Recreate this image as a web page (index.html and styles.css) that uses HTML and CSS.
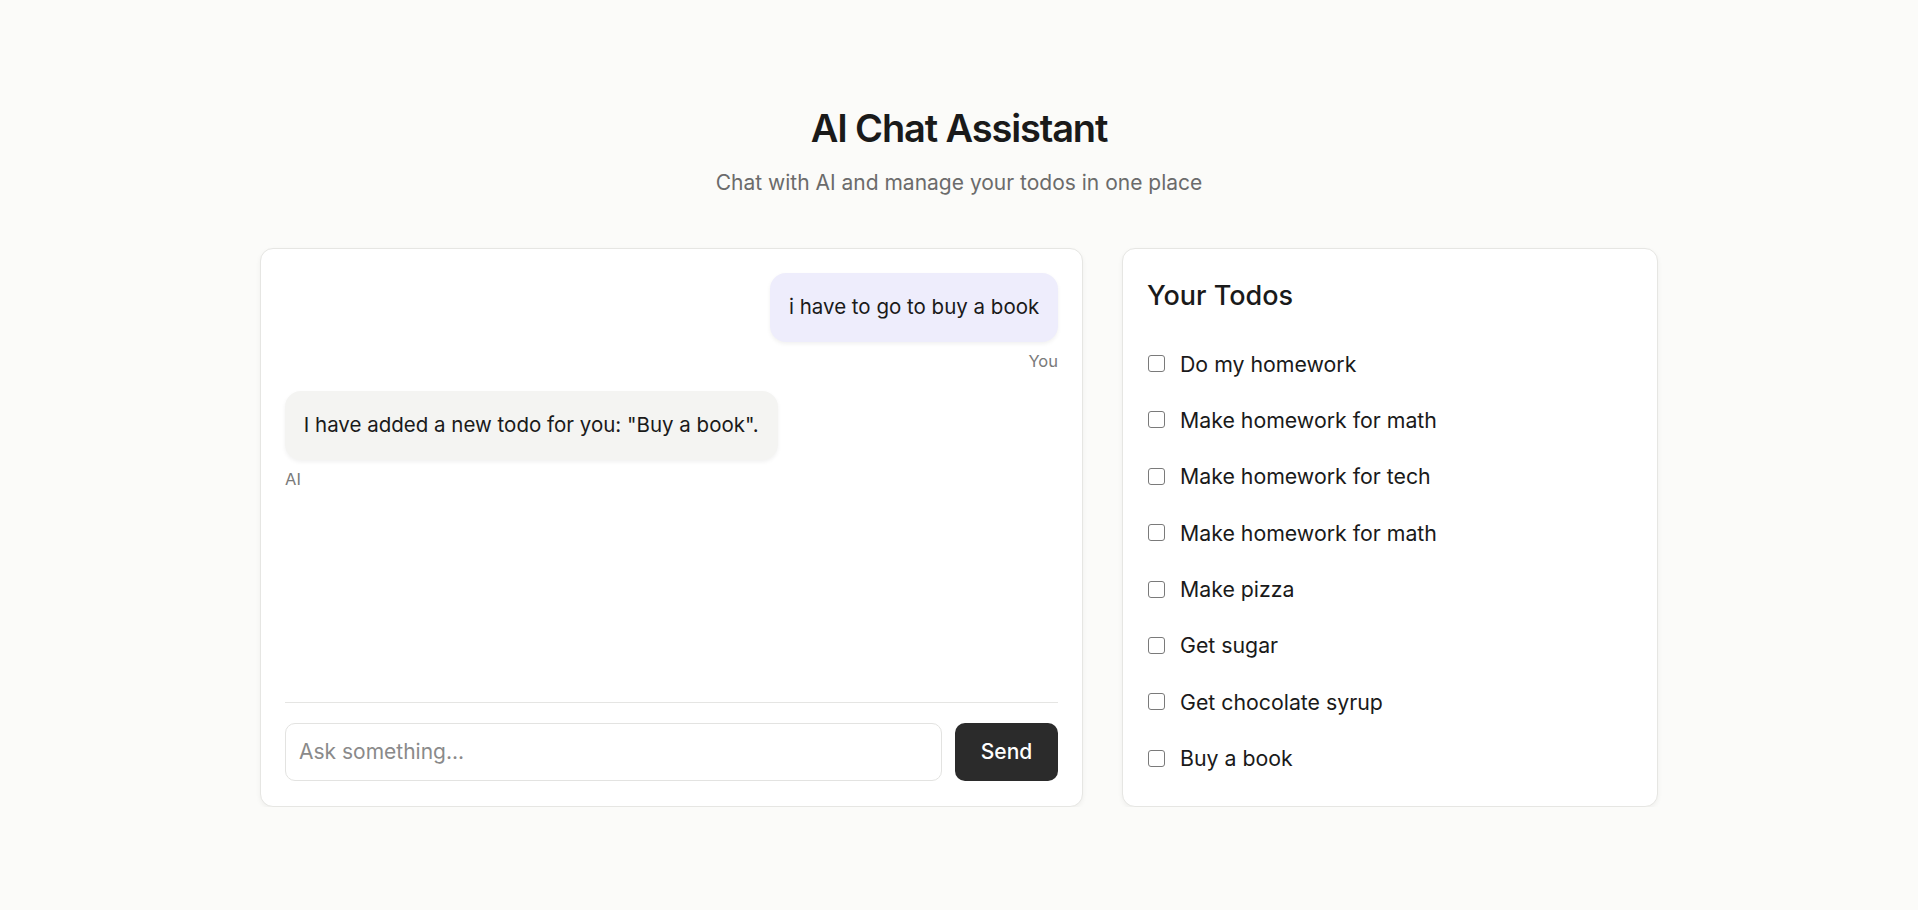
FILE: index.html
```html
<!DOCTYPE html>
<html lang="en">
<head>
<meta charset="utf-8">
<title>AI Chat Assistant</title>
<link rel="stylesheet" href="styles.css">
</head>
<body>
<div class="page">
  <header class="header">
    <h1 class="title">AI Chat Assistant</h1>
    <p class="subtitle">Chat with AI and manage your todos in one place</p>
  </header>
  <main class="layout">
    <section class="card chat">
      <div class="messages">
        <div class="msg msg-user">
          <div class="bubble bubble-user">i have to go to buy a book</div>
          <div class="msg-label">You</div>
        </div>
        <div class="msg msg-ai">
          <div class="bubble bubble-ai">I have added a new todo for you: "Buy a book".</div>
          <div class="msg-label">AI</div>
        </div>
      </div>
      <form class="composer">
        <input class="composer-input" type="text" placeholder="Ask something...">
        <button class="send-btn" type="button">Send</button>
      </form>
    </section>
    <aside class="card todos">
      <h2 class="todos-title">Your Todos</h2>
      <ul class="todo-list">
        <li class="todo-item"><input class="todo-check" type="checkbox"><span>Do my homework</span></li>
        <li class="todo-item"><input class="todo-check" type="checkbox"><span>Make homework for math</span></li>
        <li class="todo-item"><input class="todo-check" type="checkbox"><span>Make homework for tech</span></li>
        <li class="todo-item"><input class="todo-check" type="checkbox"><span>Make homework for math</span></li>
        <li class="todo-item"><input class="todo-check" type="checkbox"><span>Make pizza</span></li>
        <li class="todo-item"><input class="todo-check" type="checkbox"><span>Get sugar</span></li>
        <li class="todo-item"><input class="todo-check" type="checkbox"><span>Get chocolate syrup</span></li>
        <li class="todo-item"><input class="todo-check" type="checkbox"><span>Buy a book</span></li>
      </ul>
    </aside>
  </main>
</div>
</body>
</html>
```

FILE: styles.css
```css
* { box-sizing: border-box; }

html, body {
  margin: 0;
  padding: 0;
}

body {
  background: #fbfbf9;
  color: #1a1a1a;
  font-family: Inter, "Noto Sans", sans-serif;
}

.page {
  width: 1398px;
  margin: 0 auto;
  padding-top: 106px;
}

.header {
  text-align: center;
}

.title {
  margin: 0;
  font-size: 38px;
  line-height: 45.6px;
  font-weight: 600;
  letter-spacing: -0.03em;
  color: #1a1a1a;
}

.subtitle {
  margin: 16px 0 0;
  font-size: 21px;
  line-height: 30px;
  color: #6b6b6b;
}

.layout {
  margin-top: 50px;
  display: grid;
  grid-template-columns: 1fr 536px;
  gap: 39px;
  align-items: stretch;
}

.card {
  background: #ffffff;
  border: 1px solid #e6e6e3;
  border-radius: 13px;
  box-shadow: 0 2px 5px rgba(0, 0, 0, 0.05);
  padding: 24px 24px 25px;
}

.chat {
  display: flex;
  flex-direction: column;
}

.messages {
  flex: 1;
  display: flex;
  flex-direction: column;
  gap: 17px;
}

.msg {
  display: flex;
  flex-direction: column;
}

.msg-user { align-items: flex-end; }
.msg-ai { align-items: flex-start; }

.bubble {
  font-size: 20.5px;
  line-height: 31.5px;
  padding: 18.75px 18.75px;
  border-radius: 16px;
  box-shadow: 0 2px 4px rgba(0, 0, 0, 0.06);
}

.bubble-user { background: #eeedfc; }
.bubble-ai { background: #f4f4f2; }

.msg-label {
  margin-top: 7px;
  font-size: 16.5px;
  line-height: 25px;
  color: #7a7a7a;
}

.composer {
  display: flex;
  gap: 13px;
  margin: 0;
  padding-top: 20px;
  border-top: 1px solid #e5e5e3;
}

.composer-input {
  flex: 1;
  height: 58px;
  border: 1px solid #e3e3e1;
  border-radius: 10px;
  padding: 0 13px;
  font-family: inherit;
  font-size: 21px;
  color: #1a1a1a;
  background: #ffffff;
  outline: none;
}

.composer-input::placeholder { color: #8a8a8a; }

.send-btn {
  width: 103px;
  height: 58px;
  border: none;
  border-radius: 10px;
  background: #2b2b2b;
  color: #ffffff;
  font-family: inherit;
  font-size: 21px;
  font-weight: 500;
  cursor: pointer;
}

.todos-title {
  margin: 2px 0 0;
  font-size: 27px;
  line-height: 41px;
  font-weight: 500;
  color: #1a1a1a;
}

.todo-list {
  list-style: none;
  margin: 25.5px 0 0;
  padding: 0;
  display: flex;
  flex-direction: column;
  gap: 11.36px;
}

.todo-item {
  display: flex;
  align-items: center;
  gap: 15px;
  height: 45px;
  font-size: 21.3px;
  color: #1a1a1a;
}

.todo-check {
  appearance: none;
  -webkit-appearance: none;
  margin: 0 0 0 1px;
  width: 17px;
  height: 17px;
  border: 1.5px solid #7a7a7a;
  border-radius: 3px;
  background: #ffffff;
  flex: none;
}
```
